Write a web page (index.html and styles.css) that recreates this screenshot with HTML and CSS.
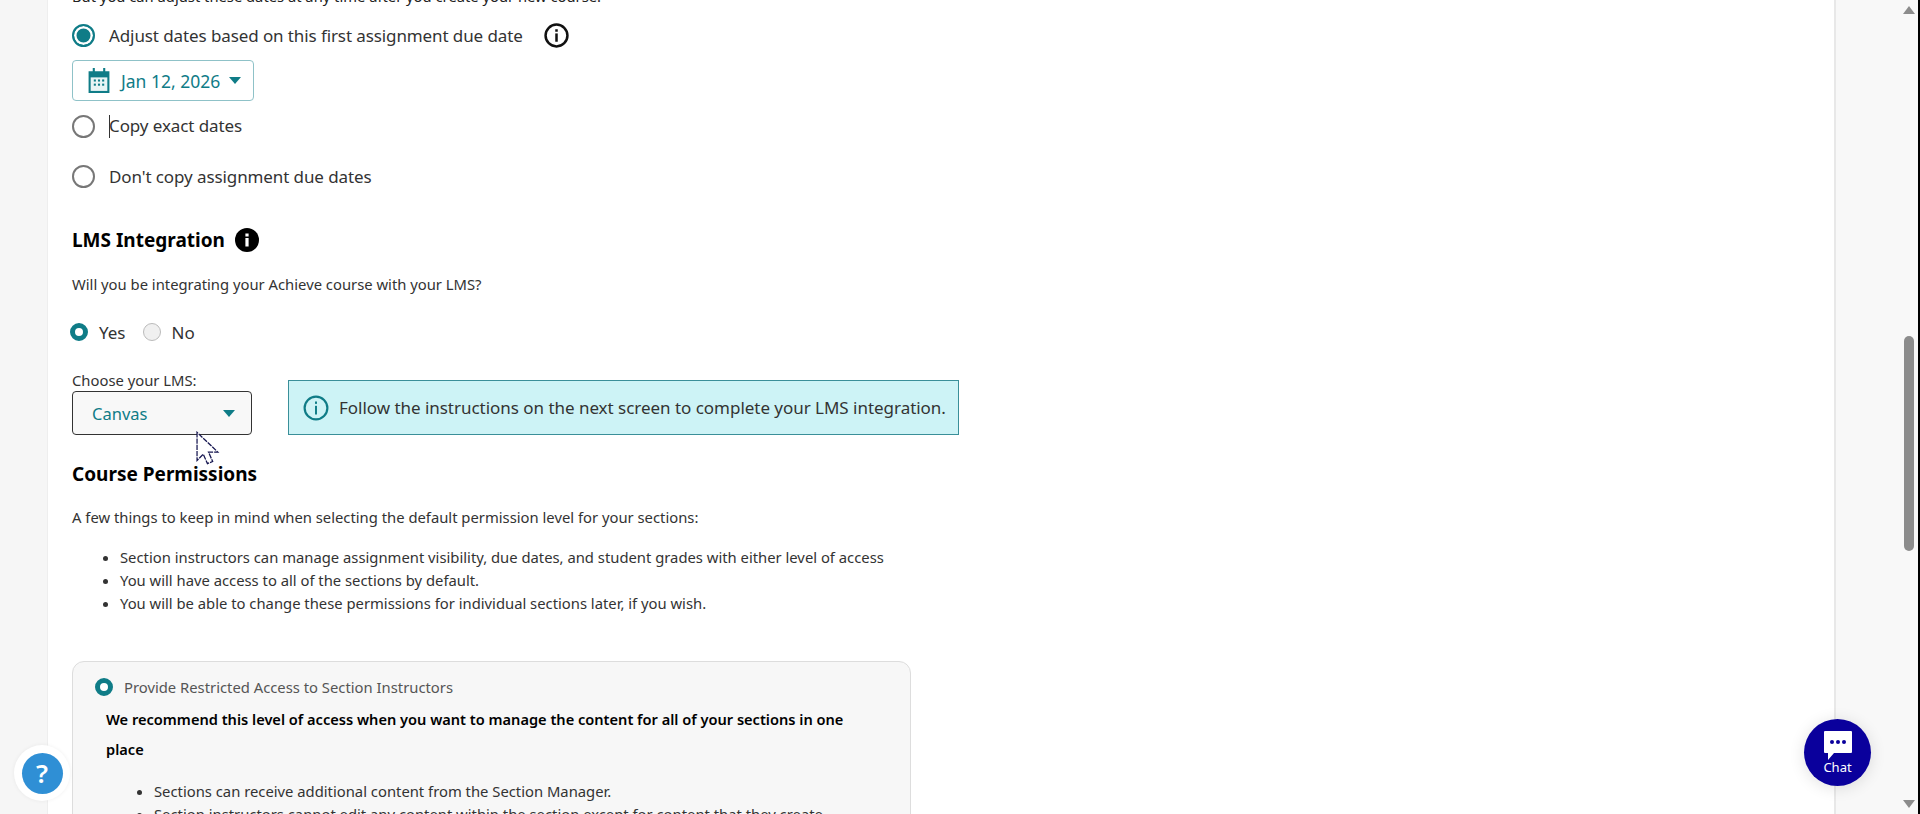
FILE: index.html
```html
<!DOCTYPE html>
<html lang="en">
<head>
  <meta charset="UTF-8">
  <title>Create Course</title>
  <link rel="stylesheet" href="styles.css">
</head>
<body>

  <div class="page">
    <div class="gutter-left"></div>

    <div class="main">
      <p class="cut-line">But you can adjust these dates at any time after you create your new course.</p>

      <div class="date-option">
        <span class="radio radio-on"></span>
        <span class="option-text">Adjust dates based on this first assignment due date</span>
        <svg class="info-outline" viewBox="0 0 24 24">
          <circle cx="12" cy="12" r="10.5" fill="none" stroke="#111" stroke-width="2.4"/>
          <rect x="10.8" y="10" width="2.4" height="8" fill="#111"/>
          <rect x="10.8" y="6" width="2.4" height="2.4" fill="#111"/>
        </svg>
      </div>

      <div class="date-button">
        <svg class="calendar" viewBox="0 0 20 24">
          <path d="M0 3h4V0h2v3h8V0h2v3h4v21H0z" fill="#0f7c87"/>
          <rect x="2" y="9" width="16" height="13" fill="#e8f4f5"/>
          <g fill="#0f7c87">
            <rect x="5" y="11" width="2" height="2"/><rect x="9" y="11" width="2" height="2"/><rect x="13" y="11" width="2" height="2"/>
            <rect x="5" y="15" width="2" height="2"/><rect x="9" y="15" width="2" height="2"/><rect x="13" y="15" width="2" height="2"/>
          </g>
        </svg>
        <span>Jan 12, 2026</span>
        <span class="caret-down"></span>
      </div>

      <div class="date-option option-two">
        <span class="radio"></span>
        <span class="option-text"><span class="text-cursor"></span>Copy exact dates</span>
      </div>

      <div class="date-option option-three">
        <span class="radio"></span>
        <span class="option-text">Don't copy assignment due dates</span>
      </div>

      <h3 class="lms-title">
        LMS Integration
        <svg class="info-solid" viewBox="0 0 24 24">
          <circle cx="12" cy="12" r="12" fill="#000"/>
          <rect x="10.4" y="10" width="3.2" height="8.5" fill="#fff"/>
          <rect x="10.4" y="5.5" width="3.2" height="3" fill="#fff"/>
        </svg>
      </h3>

      <p class="lms-question">Will you be integrating your Achieve course with your LMS?</p>

      <div class="yes-no">
        <span class="small-radio small-radio-on"></span>
        <span class="yes-label">Yes</span>
        <span class="small-radio"></span>
        <span>No</span>
      </div>

      <div class="lms-row">
        <div>
          <label class="lms-label">Choose your LMS:</label>
          <div class="lms-select">
            <span>Canvas</span>
            <span class="caret-down"></span>
          </div>
        </div>
        <div class="banner">
          <svg class="banner-icon" viewBox="0 0 24 24">
            <circle cx="12" cy="12" r="10.5" fill="none" stroke="#0f7c87" stroke-width="2"/>
            <rect x="11.1" y="10" width="1.8" height="8" fill="#0f7c87"/>
            <rect x="11.1" y="6" width="1.8" height="2.2" fill="#0f7c87"/>
          </svg>
          <span>Follow the instructions on the next screen to complete your LMS integration.</span>
        </div>
      </div>

      <h3 class="perm-title">Course Permissions</h3>
      <p class="perm-intro">A few things to keep in mind when selecting the default permission level for your sections:</p>
      <ul class="perm-list">
        <li>Section instructors can manage assignment visibility, due dates, and student grades with either level of access</li>
        <li>You will have access to all of the sections by default.</li>
        <li>You will be able to change these permissions for individual sections later, if you wish.</li>
      </ul>

      <div class="access-card">
        <div class="access-head">
          <span class="small-radio small-radio-on"></span>
          <span>Provide Restricted Access to Section Instructors</span>
        </div>
        <p class="access-bold">We recommend this level of access when you want to manage the content for all of your sections in one place</p>
        <ul class="access-list">
          <li>Sections can receive additional content from the Section Manager.</li>
          <li>Section instructors cannot edit any content within the section except for content that they create.</li>
        </ul>
      </div>
    </div>

    <div class="gutter-right">
      <div class="scrollbar">
        <span class="arrow-up"></span>
        <div class="track"><div class="thumb"></div></div>
        <span class="arrow-down"></span>
      </div>
      <div class="edge"></div>
    </div>
  </div>

  <!-- floating stuff -->
  <div class="help-halo"><div class="help-button">?</div></div>

  <div class="chat-button">
    <svg class="chat-icon" viewBox="0 0 28 30">
      <path d="M1 0h26a1 1 0 0 1 1 1v20a1 1 0 0 1-1 1H10l-6 7v-7H1a1 1 0 0 1-1-1V1a1 1 0 0 1 1-1z" fill="#fff"/>
      <circle cx="8" cy="11" r="2" fill="#0a009c"/>
      <circle cx="14" cy="11" r="2" fill="#0a009c"/>
      <circle cx="20" cy="11" r="2" fill="#0a009c"/>
    </svg>
    <span>Chat</span>
  </div>

  <svg class="mouse" viewBox="0 0 24 34">
    <path d="M1 1v27l6-6 4 9 5-2-4-9h9z" fill="#fff" stroke="#14144f" stroke-width="1.2" stroke-dasharray="5 1"/>
  </svg>

</body>
</html>
```

FILE: styles.css
```css
* {
  box-sizing: border-box;
}

html, body {
  margin: 0;
  height: 814px;
  overflow: hidden;
}

body {
  font-family: "Noto Sans", Arial, sans-serif;
  color: #333;
  background: #fff;
}

.page {
  display: flex;
  height: 814px;
}

.gutter-left {
  width: 48px;
  background: #f6f6f6;
  border-right: 1px solid #eee;
}

.main {
  flex: 1;
  padding-left: 24px;
  background: #fff;
  overflow: hidden;
}

.cut-line {
  margin: -13px 0 0;
  height: 18px;
  font-size: 14.75px;
  line-height: 18px;
  color: #222;
}

.date-option {
  display: flex;
  align-items: center;
  margin-top: 17px;
  height: 26px;
}

.option-text {
  margin-left: 14px;
  font-size: 17px;
  letter-spacing: -0.1px;
}

.option-two {
  margin-top: 12px;
}

.option-three {
  margin-top: 24px;
}

.radio {
  width: 23px;
  height: 23px;
  border: 2.5px solid #777;
  border-radius: 50%;
  background: #fff;
}

.radio-on {
  border-color: #0f7c87;
  box-shadow: inset 0 0 0 2.5px #fff;
  background: #0f7c87;
}

.info-outline {
  width: 25px;
  height: 25px;
  margin-left: 21px;
}

.date-button {
  display: flex;
  align-items: center;
  width: 182px;
  height: 41px;
  margin-top: 12px;
  padding-left: 15px;
  border: 1px solid #8fc2c8;
  border-radius: 4px;
  color: #0f7c87;
  font-size: 17.5px;
}

.calendar {
  width: 22px;
  height: 25px;
  margin-right: 11px;
}

.caret-down {
  width: 0;
  height: 0;
  margin-left: 9px;
  border-left: 6px solid transparent;
  border-right: 6px solid transparent;
  border-top: 7px solid #0f7c87;
}

.text-cursor {
  display: inline-block;
  width: 1px;
  height: 23px;
  margin-right: -1px;
  background: #333;
  vertical-align: middle;
}

h3 {
  margin: 0;
  color: #000;
  font-size: 19px;
  font-weight: 700;
}

.lms-title {
  display: flex;
  align-items: center;
  gap: 10px;
  height: 26px;
  margin-top: 38px;
}

.info-solid {
  width: 24px;
  height: 24px;
}

.lms-question {
  margin: 21px 0 0;
  height: 20px;
  font-size: 14.8px;
  line-height: 20px;
}

.yes-no {
  display: flex;
  align-items: center;
  height: 24px;
  margin-top: 26px;
  margin-left: -2px;
  font-size: 17px;
}

.small-radio {
  width: 18px;
  height: 18px;
  margin-right: 11px;
  border: 1px solid #bbb;
  border-radius: 50%;
  background: #f0f0f0;
}

.small-radio-on {
  border: 5px solid #0f7c87;
  background: #fff;
}

.yes-label {
  margin-right: 17px;
}

.lms-row {
  display: flex;
  align-items: flex-end;
  gap: 36px;
  margin-top: 26px;
}

.lms-label {
  display: block;
  height: 21px;
  font-size: 14.8px;
  line-height: 20px;
}

.lms-select {
  display: flex;
  align-items: center;
  justify-content: space-between;
  width: 180px;
  height: 44px;
  padding: 0 16px 0 19px;
  border: 1px solid #333;
  border-radius: 4px;
  background: #f8f8f8;
  color: #0f7c87;
  font-size: 16.5px;
}

.banner {
  display: flex;
  align-items: center;
  width: 671px;
  height: 55px;
  padding-left: 14px;
  border: 1px solid #3a8f99;
  background: #cdf3f6;
  color: #333;
  font-size: 17px;
  letter-spacing: -0.03px;
}

.banner-icon {
  width: 26px;
  height: 26px;
  margin-right: 10px;
}

.perm-title {
  height: 26px;
  margin-top: 26px;
  line-height: 26px;
}

.perm-intro {
  margin: 20px 0 0;
  height: 20px;
  font-size: 14.8px;
  line-height: 20px;
}

.perm-list {
  margin: 19px 0 0;
  padding-left: 48px;
  font-size: 14.8px;
  line-height: 23px;
}

.access-card {
  width: 839px;
  height: 300px;
  margin-top: 46px;
  padding: 13px 22px;
  border: 1px solid #ddd;
  border-radius: 12px;
  background: #f7f7f7;
}

.access-head {
  display: flex;
  align-items: center;
  height: 24px;
  color: #555;
  font-size: 14.8px;
}

.access-bold {
  max-width: 745px;
  margin: 5px 0 0 11px;
  color: #000;
  font-size: 14.6px;
  font-weight: 600;
  line-height: 30px;
}

.access-list {
  margin: 16px 0 0;
  padding-left: 59px;
  font-size: 14.8px;
  line-height: 23px;
}

.gutter-right {
  display: flex;
  width: 86px;
  background: #f8f8f8;
  border-left: 2px solid #e8e8e8;
  justify-content: flex-end;
}

.scrollbar {
  display: flex;
  flex-direction: column;
  align-items: center;
  width: 14px;
  margin-right: 2px;
  padding-top: 6px;
}

.track {
  flex: 1;
  padding-top: 322px;
}

.thumb {
  width: 10px;
  height: 215px;
  border-radius: 5px;
  background: #8c8c8c;
}

.arrow-up, .arrow-down {
  width: 0;
  height: 0;
  border-left: 6px solid transparent;
  border-right: 6px solid transparent;
}

.arrow-up {
  border-bottom: 8px solid #8c8c8c;
}

.arrow-down {
  margin-bottom: 6px;
  border-top: 8px solid #8c8c8c;
}

.edge {
  width: 2px;
  background: #000;
}

.help-halo {
  position: absolute;
  left: 14px;
  top: 745px;
  display: flex;
  align-items: center;
  justify-content: center;
  width: 56px;
  height: 56px;
  border-radius: 50%;
  background: #fff;
  box-shadow: 0 0 4px rgba(0,0,0,0.06);
}

.help-button {
  width: 41px;
  height: 41px;
  border-radius: 50%;
  background: #2f8fd5;
  color: #fff;
  font-size: 26px;
  font-weight: 600;
  line-height: 41px;
  text-align: center;
}

.chat-button {
  position: absolute;
  left: 1804px;
  top: 719px;
  display: flex;
  flex-direction: column;
  align-items: center;
  width: 67px;
  height: 67px;
  padding-top: 12px;
  border-radius: 50%;
  background: #0a009c;
  box-shadow: 0 2px 16px rgba(0,0,0,0.12);
  color: #fff;
  font-size: 13px;
  line-height: 16px;
}

.chat-icon {
  width: 28px;
  height: 30px;
  margin-bottom: -2px;
}

.mouse {
  position: absolute;
  left: 196px;
  top: 431px;
  width: 25px;
  height: 36px;
}
```
